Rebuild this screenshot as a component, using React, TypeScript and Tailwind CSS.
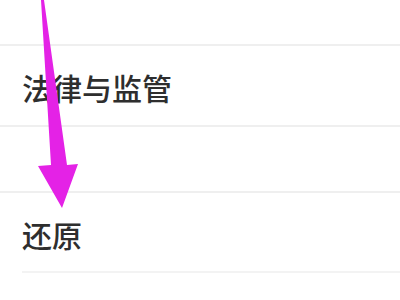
export default function App() {
  return (
    <div
      className="relative h-[300px] w-[400px] overflow-hidden bg-white text-[#2e2e2e]"
      style={{ fontFamily: '"Noto Sans CJK SC", "Noto Sans", sans-serif' }}
    >
      <div className="flex flex-col">
        <div className="h-[46px] border-b-2 border-[#efefef]" />
        <div className="flex h-[81px] items-center border-b-2 border-[#efefef] pl-[22px] pt-[2px]">
          <span className="text-[30px] font-medium leading-none">法律与监管</span>
        </div>
        <div className="h-[66px] border-b-2 border-[#efefef]" />
        <div className="flex h-[78px] items-center pl-[22px] pt-[4px]">
          <span className="text-[30px] font-medium leading-none">还原</span>
        </div>
        <div className="ml-[22px] h-[2px] bg-[#f3f3f3]" />
      </div>

      {/* pointer arrow */}
      <svg
        className="absolute left-0 top-0"
        width="400"
        height="300"
        viewBox="0 0 400 300"
      >
        <polygon
          points="41,0 44,0 67,165 78,164 62,208 38,166 51,165"
          fill="#e422e6"
        />
      </svg>
    </div>
  );
}
